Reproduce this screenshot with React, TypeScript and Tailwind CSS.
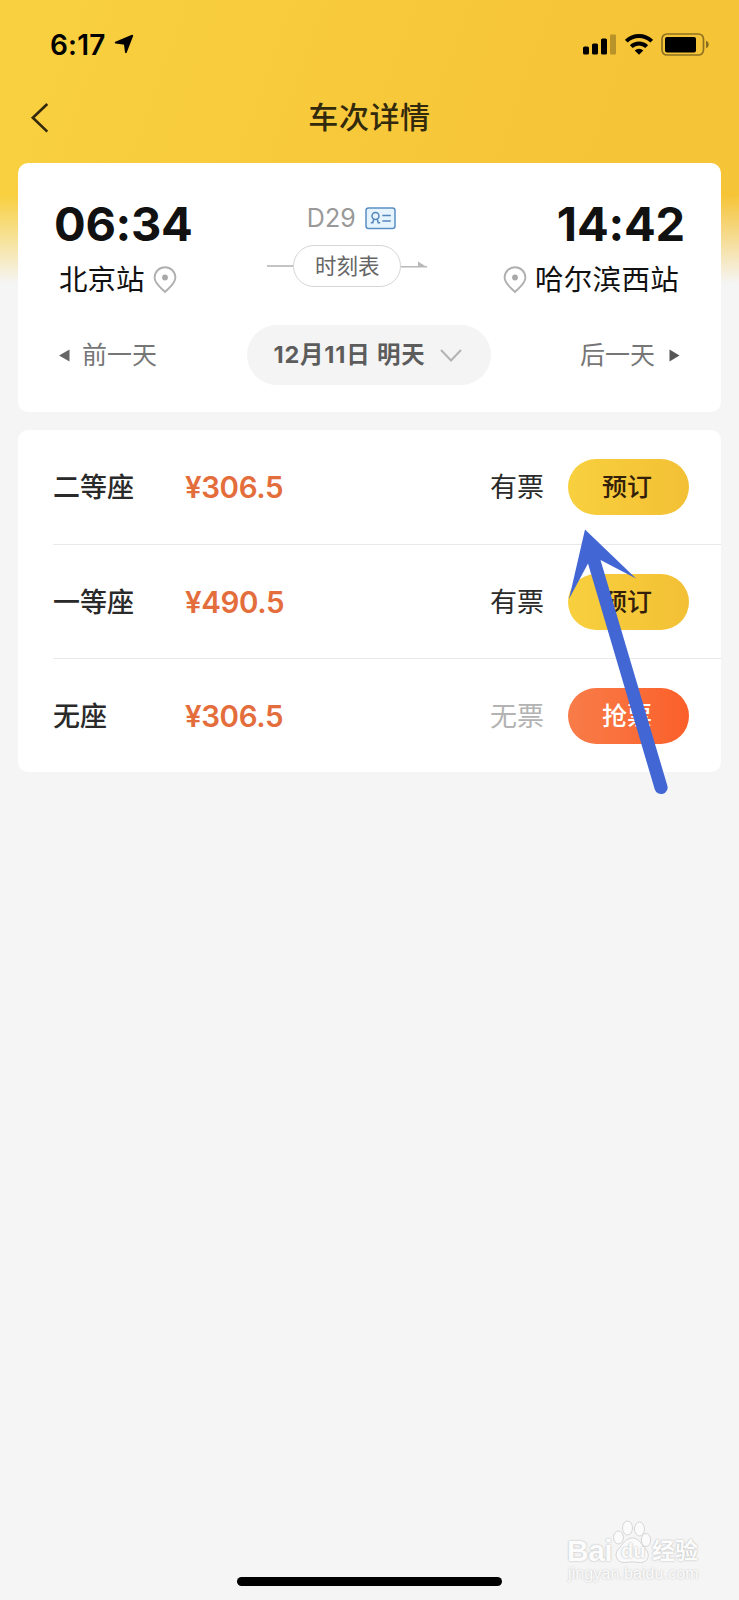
import { clsx } from "clsx"

type Seat = {
  name: string
  price: string
  available: boolean
}

const seats: Seat[] = [
  { name: "二等座", price: "¥306.5", available: true },
  { name: "一等座", price: "¥490.5", available: true },
  { name: "无座", price: "¥306.5", available: false },
]

function StatusBar() {
  return (
    <div className="flex h-[88px] items-center justify-between pr-[30px] pl-[50px]">
      <div className="flex items-center gap-[8px]">
        <span className="pt-[2px] text-[28px] leading-none font-semibold tracking-[0.2px] text-black">6:17</span>
        <svg width="20" height="20" viewBox="0 0 20 20" stroke="#000" strokeWidth="1.800" strokeLinejoin="round">
          <path d="M18.300 1.700L11.900 18.200 10.800 9.800 1.700 8.700z" />
        </svg>
      </div>

      <div className="flex items-center">
        <svg width="34" height="22" viewBox="0 0 34 22">
          <rect x="0" y="13.500" width="6" height="8" rx="1.500" />
          <rect x="9" y="10.500" width="6" height="11" rx="1.500" />
          <rect x="18" y="5.500" width="6" height="16" rx="1.500" />
          <rect x="27" y="1.500" width="6" height="20" rx="1" opacity=".25" />
        </svg>
        <svg className="ml-2" width="28" height="22" viewBox="0 0 28 22" fill="none" stroke="#000" strokeWidth="4">
          <path d="M1.300 8.200a18 18 0 0 1 25.400 0" />
          <path d="M6.300 13.600a11 11 0 0 1 15.400 0" />
          <path d="M14 21.800l-4.300-4.200a6.200 6.200 0 0 1 8.600 0z" fill="#000" stroke="none" />
        </svg>
        <svg className="ml-2" width="48" height="23" viewBox="0 0 48 23">
          <rect x="1" y="1" width="41.500" height="21" rx="5" fill="none" stroke="#000" strokeOpacity=".42" strokeWidth="1.700" />
          <rect x="4" y="4" width="31" height="15.500" rx="2" />
          <path d="M45 7.800c3.600 1.200 3.600 6.200 0 7.400z" opacity=".45" />
        </svg>
      </div>
    </div>
  )
}

function NavBar() {
  return (
    <div className="flex h-[75px] items-start px-[30px] pt-[14px]">
      <svg width="20" height="32" viewBox="0 0 20 32" fill="none" stroke="#33290c" strokeWidth="2.600">
        <path d="M17.300 2L2.800 15.800l14.500 13.800" />
      </svg>
      <h1 className="flex-1 pr-[20px] text-center text-[30px] leading-[30px] font-medium tracking-[0.6px] text-[#33290c]">
        车次详情
      </h1>
    </div>
  )
}

function PinIcon() {
  return (
    <svg width="24" height="28" viewBox="0 0 24 28" fill="none">
      <path
        d="M12 26C8.800 22.300 1.600 18.200 1.600 11.600a10.400 10.400 0 0 1 20.800 0C22.400 18.200 15.200 22.300 12 26z"
        stroke="#b0b0b0"
        strokeWidth="1.900"
      />
      <circle cx="12" cy="11.500" r="2.900" fill="#a8a8a8" />
    </svg>
  )
}

function IdCardIcon() {
  return (
    <svg width="31" height="23" viewBox="0 0 31 23" fill="none" stroke="#5585bd" strokeWidth="1.500">
      <rect x="1" y="1" width="29" height="20.500" rx="2.500" fill="#e6f5fd" stroke="#5b8fc4" />
      <circle cx="10.500" cy="9" r="3.500" />
      <path d="M5.800 15.700h2l.9-3.500M15.200 15.700h-2l-.9-3.500" />
      <path d="M17.300 8.500h8.500M17.300 14h8.500" />
    </svg>
  )
}

function TripCard() {
  return (
    <section className="mx-[18px] h-[249px] rounded-[10px] bg-white px-[36px] pt-[34px]">
      <div className="flex h-[124px] items-start justify-between">
        <div>
          <div className="text-[47px] leading-[54px] font-bold tracking-[-0.3px] text-[#111]">06:34</div>
          <div className="mt-[9px] flex items-center gap-[8px] pl-[5px]">
            <span className="text-[28.500px] leading-[40px] text-[#111]">北京站</span>
            <PinIcon />
          </div>
        </div>

        <div className="flex flex-col items-center pt-[3px]">
          <div className="flex items-center gap-[9px] pl-[7px]">
            <span className="text-[25px] leading-[36px] text-[#999]">D29</span>
            <IdCardIcon />
          </div>
          <div className="mt-[9px] flex items-center">
            <span className="h-[1.500px] w-[26px] bg-[#c4c4c4]" />
            <span className="flex h-[42px] w-[108px] items-center justify-center rounded-full border-[1.500px] border-[#d6d6d6] text-[21.500px] text-[#666]">
              时刻表
            </span>
            <svg width="27" height="10" viewBox="0 0 27 10" fill="#b8b8b8">
              <path d="M0 5h26v1.500H0zM17 .6l9.500 5.800H17z" />
            </svg>
          </div>
        </div>

        <div className="flex flex-col items-end">
          <div className="text-[47px] leading-[54px] font-bold tracking-[-0.2px] text-[#111]">14:42</div>
          <div className="mt-[9px] flex items-center gap-[8px] pr-[6px]">
            <PinIcon />
            <span className="text-[28.500px] leading-[40px] tracking-[0.3px] text-[#111]">哈尔滨西站</span>
          </div>
        </div>
      </div>

      <div className="mt-[4px] flex h-[60px] items-center justify-between px-[5px] text-[25px] text-[#767676]">
        <button type="button" className="flex w-[188px] items-center gap-[12px]">
          <svg width="11" height="13" viewBox="0 0 11 13" fill="#666">
            <path d="M0 6.500L10.500.5v12z" />
          </svg>
          <span className="pt-[2px]">前一天</span>
        </button>
        <button
          type="button"
          className="flex h-[60px] w-[244px] items-center rounded-full bg-[#f4f4f4] pl-[26px] text-[23.500px] font-bold text-[#5c5c5c]"
        >
          <span className="w-[153px] tracking-[0.800px] whitespace-nowrap">12月11日 明天</span>
          <svg className="ml-[14px]" width="22" height="13" viewBox="0 0 22 13" fill="none" stroke="#b3b3b3" strokeWidth="2">
            <path d="M1 1l10 10.500L21 1" />
          </svg>
        </button>
        <button type="button" className="flex w-[189px] items-center justify-end gap-[14px]">
          <span className="pt-[2px]">后一天</span>
          <svg width="11" height="13" viewBox="0 0 11 13" fill="#555">
            <path d="M10.500 6.500L.5.500v12z" />
          </svg>
        </button>
      </div>
    </section>
  )
}

function SeatRow({ seat }: { seat: Seat }) {
  return (
    <li className="flex h-[114px] items-center border-t border-[#e8e8e8] pr-[32px] first:border-t-0">
      <span className="w-[132px] pt-[3px] text-[27px] font-medium text-[#2a2a2a]">{seat.name}</span>
      <span className="pt-[1px] text-[29.500px] font-semibold tracking-[-0.4px] text-[#e46d3c]">{seat.price}</span>
      <span
        className={clsx("mr-[24px] ml-auto pt-[3px] text-[27px]", seat.available ? "text-[#2a2a2a]" : "text-[#b3b3b3]")}
      >
        {seat.available ? "有票" : "无票"}
      </span>
      <button
        type="button"
        className={clsx(
          "flex h-[56px] w-[121px] items-center justify-center rounded-full pt-[2px] pr-[3px] text-[25px] font-medium",
          seat.available
            ? "bg-linear-to-r from-[#f8d03e] to-[#f3c035] text-[#33200a]"
            : "bg-linear-to-r from-[#f87c48] to-[#fb5f29] text-white",
        )}
      >
        {seat.available ? "预订" : "抢票"}
      </button>
    </li>
  )
}

function Watermark() {
  return (
    <div className="absolute right-[36px] bottom-[13px] flex h-[67px] w-[136px] flex-col text-[#fcfcfc] [text-shadow:0_0_2px_#aaa]">
      <div className="flex h-[44px] items-end leading-none">
        <span className="w-[46px] font-['Liberation_Sans'] text-[30px] leading-[26px] font-bold tracking-[-0.5px]">Bai</span>
        <span className="relative h-[44px] w-[39px]">
          <svg className="absolute inset-0" width="38" height="44" viewBox="0 0 38 44" fill="#fbfbfb" stroke="#d6d6d6">
            <ellipse cx="5.500" cy="17.500" rx="5" ry="6.500" />
            <ellipse cx="14.500" cy="8" rx="5" ry="7" />
            <ellipse cx="26.500" cy="9" rx="5" ry="7" />
            <ellipse cx="33" cy="20" rx="4.700" ry="6.500" />
            <path d="M19.500 18c7 0 9 7 13 11 5 5 3 13.500-5 13.500-3 0-5-.7-8-.7s-5 .7-8 .7c-8 0-11-8-6-13.500 4-4 7-11 14-11z" />
          </svg>
          <span className="absolute bottom-[3px] left-[8px] font-['Liberation_Sans'] text-[20px] font-bold text-[#fafafa]">du</span>
        </span>
        <span className="text-[23px] leading-[25px] font-bold">经验</span>
      </div>
      <span className="ml-[1px] font-['Liberation_Sans'] text-[16px] leading-[20px] tracking-[0.100px] whitespace-nowrap [text-shadow:0_0_2px_#bbb]">
        jingyan.baidu.com
      </span>
    </div>
  )
}

export default function App() {
  return (
    <main className="relative h-[1600px] w-[739px] overflow-hidden bg-[#f5f5f5] bg-[linear-gradient(to_bottom,transparent_195px,#f5f5f5_284px),linear-gradient(110deg,#f9d140_0px,#f6c437_620px)] bg-no-repeat font-['Inter','Noto_Sans_CJK_SC',sans-serif]">
      <StatusBar />
      <NavBar />
      <TripCard />

      <section className="mx-[18px] mt-[18px] h-[342px] rounded-[10px] bg-white pl-[35px]">
        <ul>
          {seats.map((seat) => (
            <SeatRow key={seat.name} seat={seat} />
          ))}
        </ul>
      </section>

      <svg className="absolute top-[526px] left-[564px]" width="110" height="274" viewBox="564 526 110 274" fill="#4267d5">
        <path d="M585 529.500L636 578.500L600.500 560L667.300 785.500A6.500 6.500 0 0 1 654.800 789.500L588 563.500L569 599z" />
      </svg>

      <Watermark />
      <div className="absolute bottom-[14px] left-[237px] h-[9px] w-[265px] rounded-full bg-black" />
    </main>
  )
}
